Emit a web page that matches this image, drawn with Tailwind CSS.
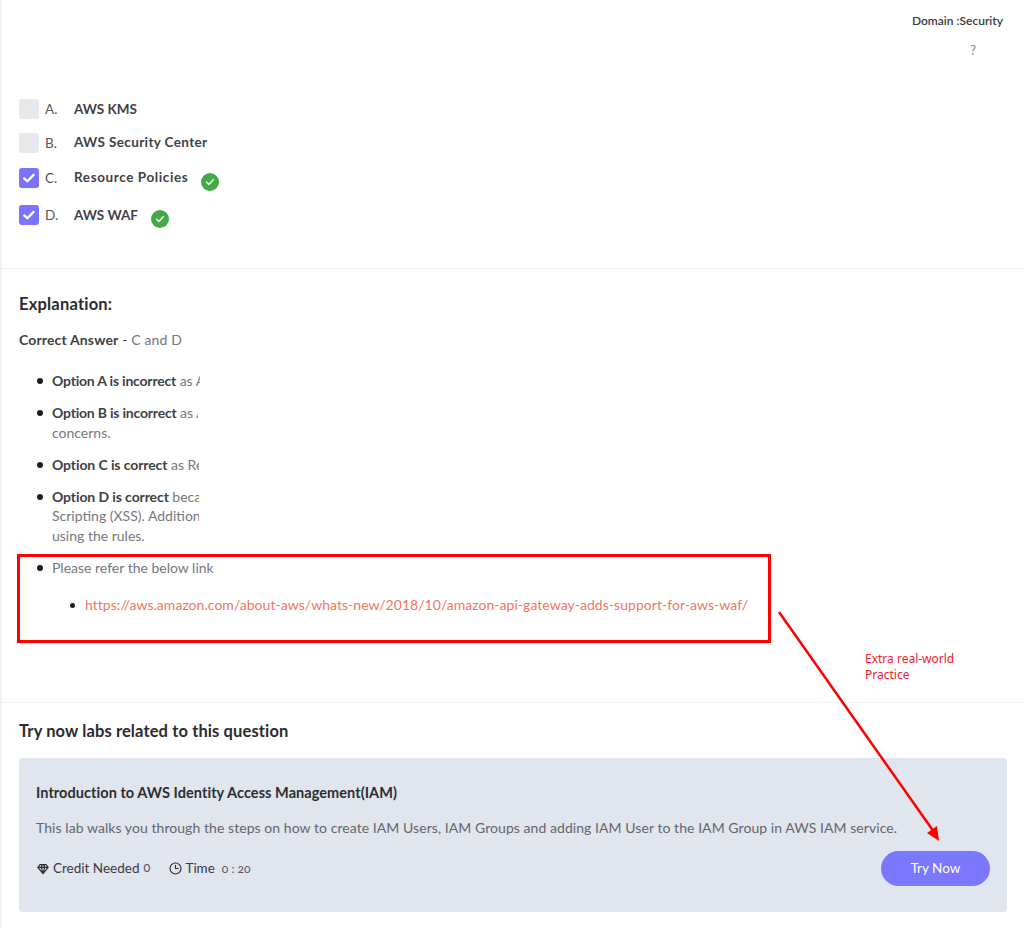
<!doctype html>
<html lang="en">
<head>
  <meta charset="utf-8" />
  <title>Question review</title>
  <script src="https://cdn.jsdelivr.net/npm/@tailwindcss/browser@4"></script>
</head>
<body class="bg-white font-['Lato','Noto_Sans',sans-serif] text-[#2d2d33]">
  <div class="relative w-[1024px] h-[928px] overflow-hidden border-l-2 border-[#f1f1f8]">

    <!-- Domain -->
    <section class="h-[99px] pt-[13px] pr-[21px] text-right">
      <p class="text-[12px] leading-[15px] font-semibold text-[#3a3a40]">Domain :Security</p>
      <p class="mt-[15px] pr-[27px] text-[13px] leading-[15px] text-[#8f8a80]">?</p>
    </section>

    <!-- Options -->
    <section class="h-[170px] pl-[17px] border-b border-[#f2f2f4]">
      <div class="flex items-center h-[20px]">
        <span class="w-[20px] h-[20px] rounded-[3px] bg-[#e8e9eb]"></span>
        <span class="w-[35px] pl-[6px] text-[13.5px] text-[#55555b]">A.</span>
        <span class="text-[13.5px] font-bold text-[#3f3f48]">AWS KMS</span>
      </div>
      <div class="flex items-center h-[20px] mt-[14px]">
        <span class="w-[20px] h-[20px] rounded-[3px] bg-[#e8e9eb]"></span>
        <span class="w-[35px] pl-[6px] text-[13.5px] text-[#55555b]">B.</span>
        <span class="pb-[2px] text-[13.5px] tracking-[0.37px] font-bold text-[#3f3f48]">AWS Security Center</span>
      </div>
      <div class="flex items-center h-[20px] mt-[15px]">
        <span class="flex items-center justify-center w-[20px] h-[20px] rounded-[3px] bg-[#7b73fb]">
          <svg width="16" height="16" viewBox="0 0 16 16" fill="none" stroke="#fff" stroke-width="2.3" stroke-linecap="round" stroke-linejoin="round"><path d="M3.2 8.4l3.2 2.9 6.2-6.4"/></svg>
        </span>
        <span class="w-[35px] pl-[6px] text-[13.5px] text-[#55555b]">C.</span>
        <span class="pb-[2px] text-[13.5px] tracking-[0.6px] font-bold text-[#3f3f48]">Resource Policies</span>
        <span class="flex items-center justify-center w-[18px] h-[18px] ml-[13px] mt-[8px] rounded-full bg-[#43a846]">
          <svg width="12" height="12" viewBox="0 0 12 12" fill="none" stroke="#e6f4e6" stroke-width="1.6" stroke-linecap="round" stroke-linejoin="round"><path d="M2.6 6.2l2.3 2.3 4.4-4.8"/></svg>
        </span>
      </div>
      <div class="flex items-center h-[20px] mt-[17px]">
        <span class="flex items-center justify-center w-[20px] h-[20px] rounded-[3px] bg-[#7b73fb]">
          <svg width="16" height="16" viewBox="0 0 16 16" fill="none" stroke="#fff" stroke-width="2.3" stroke-linecap="round" stroke-linejoin="round"><path d="M3.2 8.4l3.2 2.9 6.2-6.4"/></svg>
        </span>
        <span class="w-[35px] pl-[6px] text-[13.5px] text-[#55555b]">D.</span>
        <span class="text-[13.5px] font-bold text-[#3f3f48]">AWS WAF</span>
        <span class="flex items-center justify-center w-[18px] h-[18px] ml-[13px] mt-[8px] rounded-full bg-[#43a846]">
          <svg width="12" height="12" viewBox="0 0 12 12" fill="none" stroke="#e6f4e6" stroke-width="1.6" stroke-linecap="round" stroke-linejoin="round"><path d="M2.6 6.2l2.3 2.3 4.4-4.8"/></svg>
        </span>
      </div>
    </section>

    <!-- Explanation -->
    <section class="h-[434px] pl-[17px] pt-[25px] border-b border-[#f2f2f4]">
      <h2 class="text-[16.5px] tracking-[0.2px] leading-[20px] font-bold text-[#2b2b30]">Explanation:</h2>
      <p class="mt-[17px] text-[14px] tracking-[0.15px] leading-[18px] text-[#77777d]"><b class="font-bold text-[#3f3f45]">Correct Answer</b> <span class="text-[#3f3f45]">-</span> C and D</p>

      <ul class="mt-[22px] pl-[18px] text-[14px] leading-[19.5px] text-[#77777d]">
        <li class="flex gap-[9px]">
          <span class="shrink-0 w-[6px] h-[6px] mt-[7px] rounded-full bg-[#1d1d20]"></span>
          <div class="w-[148px] overflow-hidden whitespace-nowrap"><b class="tracking-[-0.2px] font-bold text-[#3f3f45]">Option A is incorrect</b> as AWS KMS</div>
        </li>
        <li class="flex gap-[9px] mt-[12.5px]">
          <span class="shrink-0 w-[6px] h-[6px] mt-[7px] rounded-full bg-[#1d1d20]"></span>
          <div>
            <div class="w-[146px] overflow-hidden whitespace-nowrap"><b class="tracking-[-0.2px] font-bold text-[#3f3f45]">Option B is incorrect</b> as AWS Security</div>
            <div>concerns.</div>
          </div>
        </li>
        <li class="flex gap-[9px] mt-[12.5px]">
          <span class="shrink-0 w-[6px] h-[6px] mt-[7px] rounded-full bg-[#1d1d20]"></span>
          <div class="w-[147px] overflow-hidden whitespace-nowrap"><b class="tracking-[-0.1px] font-bold text-[#3f3f45]">Option C is correct</b> as Resource</div>
        </li>
        <li class="flex gap-[9px] mt-[12.5px]">
          <span class="shrink-0 w-[6px] h-[6px] mt-[7px] rounded-full bg-[#1d1d20]"></span>
          <div>
            <div class="w-[147px] overflow-hidden whitespace-nowrap"><b class="tracking-[-0.1px] font-bold text-[#3f3f45]">Option D is correct</b> because AWS</div>
            <div class="w-[147px] overflow-hidden whitespace-nowrap">Scripting (XSS). Additionally</div>
            <div>using the rules.</div>
          </div>
        </li>
        <li class="flex gap-[9px] mt-[12.5px]">
          <span class="shrink-0 w-[6px] h-[6px] mt-[7px] rounded-full bg-[#1d1d20]"></span>
          <div>
            <div>Please refer the below link</div>
            <ul class="mt-[18px] pl-[18px]">
              <li class="flex gap-[10px] tracking-[0.04px] text-[#f0775f]">
                <span class="shrink-0 w-[5px] h-[5px] mt-[8px] rounded-full bg-[#1d1d20]"></span>
                <span>https://aws.amazon.com/about-aws/whats-new/2018/10/amazon-api-gateway-adds-support-for-aws-waf/</span>
              </li>
            </ul>
          </div>
        </li>
      </ul>
    </section>

    <!-- Labs -->
    <section class="pl-[17px] pt-[18px]">
      <h2 class="text-[16.5px] tracking-[0.12px] leading-[20px] font-bold text-[#2b2b30]">Try now labs related to this question</h2>
      <div class="mt-[17px] w-[988px] h-[154px] rounded-[4px] bg-[#e1e5ee] pl-[17px] pr-[17px] pt-[26px]">
        <h3 class="text-[14.5px] tracking-[0.06px] leading-[18px] font-bold text-[#2d2d33]">Introduction to AWS Identity Access Management(IAM)</h3>
        <p class="mt-[17px] text-[14px] tracking-[0.06px] leading-[18px] text-[#66666c]">This lab walks you through the steps on how to create IAM Users, IAM Groups and adding IAM User to the IAM Group in AWS IAM service.</p>
        <div class="flex items-center justify-between mt-[14px]">
          <div class="flex items-center text-[13.5px] text-[#3a3a44]">
            <svg class="ml-[1px]" width="12" height="12" viewBox="0 0 14 14" fill="none" stroke="#2d2d33" stroke-width="1.4" stroke-linejoin="round"><path d="M3.5 2h7L13 5.2 7 12.5 1 5.2zM1 5.2h12M5 5.2L7 12.5l2-7.3M5 5.2l1-3.2M9 5.2L8 2"/></svg>
            <span class="ml-[4px]">Credit Needed</span>
            <span class="ml-[4px] w-[8px] text-[12.5px] oldstyle-nums text-[#55555b]">0</span>
            <svg class="ml-[18px]" width="13" height="13" viewBox="0 0 14 14" fill="none" stroke="#2d2d33" stroke-width="1.2" stroke-linecap="round"><circle cx="7" cy="7" r="5.9"/><path d="M7 3.6V7h3"/></svg>
            <span class="ml-[3px]">Time</span>
            <span class="ml-[7px] text-[12px] oldstyle-nums text-[#55555b]">0 : 20</span>
          </div>
          <button class="w-[109px] h-[35px] rounded-full bg-[#7b78ff] text-[13.5px] text-white">Try Now</button>
        </div>
      </div>
    </section>

    <!-- Red annotations drawn over the page -->
    <div class="absolute left-[15px] top-[554px] w-[754px] h-[89px] border-[3px] border-[#ff0000]"></div>
    <svg class="absolute left-0 top-0" width="1024" height="928" fill="none">
      <path d="M777 612L932 832" stroke="#ff0000" stroke-width="2.5"/>
      <path d="M937 841L925 833L935 826z" fill="#ff0000"/>
    </svg>
    <p class="absolute left-[863px] top-[650.5px] text-[12px] leading-[16.5px] text-[#f02030] font-['Noto_Sans',sans-serif]">Extra real-world<br>Practice</p>
  </div>
</body>
</html>
